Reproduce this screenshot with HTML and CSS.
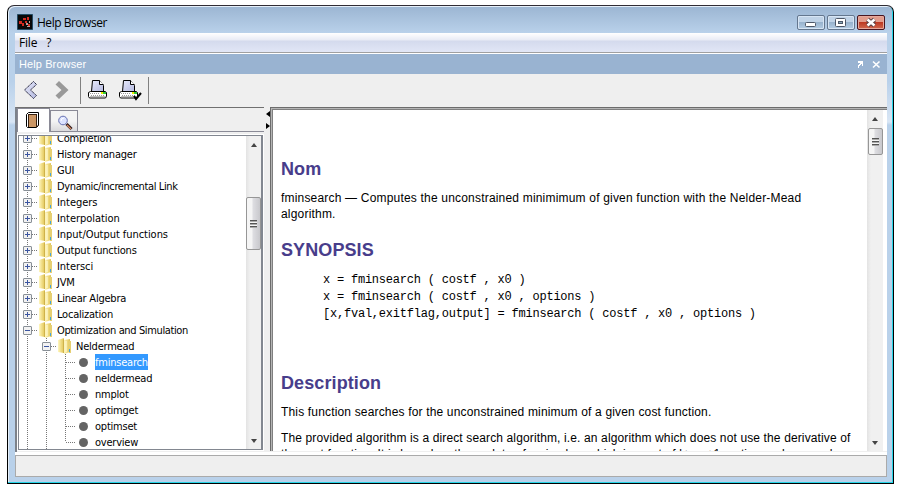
FILE: index.html
```html
<!DOCTYPE html>
<html lang="en">
<head>
<meta charset="utf-8">
<title>Help Browser</title>
<link rel="stylesheet" href="styles.css">
</head>
<body>
<svg class="defs" width="0" height="0">
  <defs>
    <linearGradient id="gold"><stop offset="0" stop-color="#fff7c0"/><stop offset=".5" stop-color="#f0dc84"/><stop offset="1" stop-color="#dfc455"/></linearGradient>
    <linearGradient id="lav" x2="1" y2="1"><stop offset="0" stop-color="#e8eafa"/><stop offset="1" stop-color="#b4b9e0"/></linearGradient>
  </defs>
  <symbol id="folder" viewBox="0 0 14 16">
    <path d="M0 2l6-2v15l-6-1z" fill="url(#gold)"/>
    <path d="M5 1h1v14H5z" fill="#cfb24a"/>
    <path d="M6 2l6-1v13l-6 2z" fill="url(#gold)"/>
    <path d="M7.500 3h1v11h-1z" fill="#fffbd8"/>
    <path d="M11 3h2v12h-2z" fill="#e6cf72"/>
    <path d="M11 11h1v3h-1z" fill="#42a4e0"/>
  </symbol>
  <symbol id="printer" viewBox="0 0 22 22">
    <path d="M4.500 1.500h7l4 5v6h-12z" fill="url(#lav)" stroke="#000"/>
    <path d="M11.500 1.500v4h4" fill="#fff" stroke="#000"/>
    <path d="M2.500 12.500h15l1 1v4l-1 1.500h-16l-1-1.500v-4z" fill="#fff" stroke="#000"/>
    <path d="M2 14.500h10M3 16.500h14" stroke="#999" stroke-dasharray="1 1"/>
    <path d="M2 17.500h16" stroke="#bbb"/>
    <path d="M13 13h2v2h-2z" fill="#f0f000"/><path d="M15 13h3v2h-3z" fill="#35c835"/>
  </symbol>
</svg>
<div class="window">
  <header class="titlebar">
    <svg class="logo" width="16" height="16" viewBox="0 0 16 16"><path d="M.5.5h15v15H.5z" fill="#080808" stroke="#234b63"/><g fill="#d22b20"><path d="M2 7h3v3H2zM5 9h2v3H5zM6 4h3v2H6zM10 3h2v3h-2zM8 7h2v2H8zM11 10h2v2h-2z"/></g><path d="M9 9h2v2H9zM12 7h1v2h-1zM10 12h3v1h-3z" fill="#b5a29d"/></svg>
    <h1>Help Browser</h1>
    <span class="win-btn"><svg width="26" height="13"><rect x="7.500" y="6.500" width="10" height="4" rx="1" fill="#fff" stroke="#4e5868"/></svg></span>
    <span class="win-btn"><svg width="26" height="13"><rect x="7.500" y="2.500" width="10" height="8" rx="1" fill="#fff" stroke="#4e5868"/><rect x="10.500" y="5.500" width="4" height="2" fill="#8ab" stroke="#4e5868"/></svg></span>
    <span class="win-btn close"><svg width="26" height="13"><path d="M9.500 3.500l7 6M16.500 3.500l-7 6" stroke="#594044" stroke-width="4.500"/><path d="M9.500 3.500l7 6M16.500 3.500l-7 6" stroke="#fff" stroke-width="2.500"/></svg></span>
  </header>
  <nav class="menu"><span>File</span><span>?</span></nav>
  <div class="dockbar"><span class="docktitle">Help Browser</span>
    <svg width="9" height="9" shape-rendering="crispEdges"><path d="M2 1h5v5H6V4H5v1H4v1H3v2H2V5h1V4h1V3H2z" fill="#fff"/></svg>
    <svg width="9" height="9"><path d="M1 1.500l6.500 6M7.500 1.500L1 7.500" stroke="#fff" stroke-width="1.600"/></svg>
  </div>
  <div class="toolbar">
    <svg class="arrow" width="16" height="20" viewBox="0 0 16 20"><path d="M10.500 1.500l3 3-6 5.500 6 5.500-3 3L1.500 10z" fill="url(#lav)" stroke="#23233c" stroke-dasharray="1.500 .5"/></svg>
    <svg class="arrow next" width="16" height="20" viewBox="0 0 16 20"><path d="M5 1l9.500 9L5 19l-3.500-3.500L7.500 10l-6-5.500z" fill="#999"/></svg>
    <i class="sep"></i>
    <svg class="print" width="22" height="22"><use href="#printer"/></svg>
    <svg class="print" width="24" height="22"><use href="#printer" width="22" height="22"/><path d="M15 17l2 3 5-6" fill="none" stroke="#000" stroke-width="2"/></svg>
    <i class="sep"></i>
  </div>
  <main class="panes">
    <aside class="side">
      <div class="tabs">
        <div class="tab active"><svg width="16" height="18" viewBox="0 0 16 18"><path d="M3.500 1.500h10v13l-2 2h-9l-1-1v-12z" fill="#fff" stroke="#000"/><path d="M4 4h8v12H4z" fill="#cb9664"/><path d="M3.500 3v13M3 3.500h9M11.500 4v12l2-2" fill="none" stroke="#38200f"/></svg></div>
        <div class="tab"><svg width="16" height="16" viewBox="0 0 16 16"><path d="M9.500 9l5 5" stroke="#301a1a" stroke-width="3"/><path d="M10 10l4 4" stroke="#d88c65" stroke-width="1.300"/><circle cx="6" cy="5.500" r="4.300" fill="#dbe2ff" stroke="#6670b0"/><path d="M4 6q0-3 3-3" stroke="#fff" fill="none"/></svg></div>
      </div>
      <div class="treebox">
        <ul class="tree">
          <li><b class="box plus"></b><svg class="folder"><use href="#folder"/></svg><span>Completion</span></li>
          <li><b class="box plus"></b><svg class="folder"><use href="#folder"/></svg><span>History manager</span></li>
          <li><b class="box plus"></b><svg class="folder"><use href="#folder"/></svg><span>GUI</span></li>
          <li><b class="box plus"></b><svg class="folder"><use href="#folder"/></svg><span class="tight">Dynamic/incremental Link</span></li>
          <li><b class="box plus"></b><svg class="folder"><use href="#folder"/></svg><span class="loose">Integers</span></li>
          <li><b class="box plus"></b><svg class="folder"><use href="#folder"/></svg><span class="loose">Interpolation</span></li>
          <li><b class="box plus"></b><svg class="folder"><use href="#folder"/></svg><span class="loose">Input/Output functions</span></li>
          <li><b class="box plus"></b><svg class="folder"><use href="#folder"/></svg><span>Output functions</span></li>
          <li><b class="box plus"></b><svg class="folder"><use href="#folder"/></svg><span class="loose">Intersci</span></li>
          <li><b class="box plus"></b><svg class="folder"><use href="#folder"/></svg><span>JVM</span></li>
          <li><b class="box plus"></b><svg class="folder"><use href="#folder"/></svg><span>Linear Algebra</span></li>
          <li><b class="box plus"></b><svg class="folder"><use href="#folder"/></svg><span>Localization</span></li>
          <li><b class="box"></b><svg class="folder"><use href="#folder"/></svg><span class="tight">Optimization and Simulation</span></li>
          <li><i class="guide"></i><b class="box"></b><svg class="folder"><use href="#folder"/></svg><span>Neldermead</span></li>
          <li><i class="guide"></i><i class="guide"></i><i class="guide leaf"></i><em class="dot"></em><span class="selected">fminsearch</span></li>
          <li><i class="guide"></i><i class="guide"></i><i class="guide leaf"></i><em class="dot"></em><span>neldermead</span></li>
          <li><i class="guide"></i><i class="guide"></i><i class="guide leaf"></i><em class="dot"></em><span>nmplot</span></li>
          <li><i class="guide"></i><i class="guide"></i><i class="guide leaf"></i><em class="dot"></em><span>optimget</span></li>
          <li><i class="guide"></i><i class="guide"></i><i class="guide leaf"></i><em class="dot"></em><span>optimset</span></li>
          <li><i class="guide"></i><i class="guide"></i><i class="guide leaf end"></i><em class="dot"></em><span>overview</span></li>
        </ul>
        <div class="scroll side-scroll"><i class="up"></i><div class="thumb"><i></i></div><i class="down"></i></div>
      </div>
    </aside>
    <div class="divider"><svg width="4" height="18"><path d="M4 0v6L0 3zM0 12v6l4-3z" fill="#000"/></svg></div>
    <section class="docpane">
      <article class="doc">
        <h2>Nom</h2>
        <p class="lead">fminsearch — Computes the unconstrained minimimum of given function with the Nelder-Mead<br>algorithm.</p>
        <h2 class="synopsis">SYNOPSIS</h2>
        <pre>x = fminsearch ( costf , x0 )
x = fminsearch ( costf , x0 , options )
[x,fval,exitflag,output] = fminsearch ( costf , x0 , options )</pre>
        <h2 class="description">Description</h2>
        <p class="summary">This function searches for the unconstrained minimum of a given cost function.</p>
        <p>The provided algorithm is a direct search algorithm, i.e. an algorithm which does not use the derivative of<br>the cost function. It is based on the update of a simplex, which is a set of k&gt;=n+1 vertices, where each</p>
      </article>
      <div class="scroll doc-scroll"><i class="up"></i><div class="thumb"><i></i></div><i class="down"></i></div>
    </section>
  </main>
  <footer class="status"></footer>
</div>
</body>
</html>
```
FILE: styles.css
```css
*, *::before { box-sizing: border-box; }
body { margin: 0; background: #fff; overflow: hidden; font-family: "Liberation Sans", Arial, sans-serif; color: #000; }
.defs { display: block; height: 0; }
h1, h2, p, pre, ul { margin: 0; padding: 0; font-weight: normal; }
svg { flex: none; display: block; }

.window {
  margin: 5px 0 0 7px; width: 887px; height: 479px; padding: 0 6px 6px 7px;
  display: flex; flex-direction: column;
  border: 1px solid #000; border-top-color: #302c34; border-radius: 7px 7px 0 0;
  box-shadow: inset -1px -1px #27d5e8, inset 1px 1px #e6f0fa;
  background: linear-gradient(#9bb5d2 0, #b9d1ea 27px, #b9d1ea 75px, #d9e6f5 116px, #b9d1ea 119px);
}
.titlebar { height: 27px; flex: none; display: flex; align-items: flex-start; padding: 9px 2px 0 2px; }
.logo { margin-top: -1px; }
.titlebar h1 { flex: 1; margin-left: 4px; font: 12px/16px "Open Sans", sans-serif; letter-spacing: -.48px; }
.win-btn { width: 28px; height: 15px; margin-left: 2px; border: 1px solid #64778e; border-radius: 2px; box-shadow: inset 0 0 0 1px #d7e5f4; background: linear-gradient(#c0d3e7 45%, #98b3ce 50%, #b5cde4); }
.win-btn.close { border-color: #491620; box-shadow: inset 0 0 0 1px #e6a99c; background: linear-gradient(#e29c8c 45%, #bd3a23 50%, #d16a50); }
.menu { height: 20px; flex: none; display: flex; gap: 9px; padding-left: 4px; font: 12px/20px "Open Sans", sans-serif; letter-spacing: -.2px; background: linear-gradient(#fff 0, #e8ebf5 7px, #d4daed 8px, #e1e6f6 19px, #a0a0a0 19px); }
.dockbar { height: 21px; flex: none; display: flex; align-items: center; gap: 7px; padding: 0 6px 0 4px; border-top: 1px solid #fff; background: #99b3d1; color: #fff; font-size: 11px; }
.docktitle { flex: 1; letter-spacing: .1px; }
.toolbar { height: 33px; flex: none; display: flex; align-items: flex-start; background: #efefef; padding: 3px 0 0 8px; }
.arrow { margin: 3px 0 0 0; }
.arrow.next { margin-left: 15px; }
.sep { width: 1px; height: 27px; background: #808080; margin: 0 8px 0 10px; }
.print { margin: 2px 0 0 -1px; }
.print + .print { margin-left: 9px; }
.print + .sep { margin-left: 5px; }

.panes { height: 345px; flex: none; display: flex; background: #efefef; }
.side { width: 249px; display: flex; flex-direction: column; border-top: 1px solid #707070; border-left: 2px solid #7d828a; background: #efefef; }
.tabs { height: 24px; flex: none; display: flex; align-items: flex-end; border-bottom: 1px solid #8a8a96; }
.tab { width: 28px; height: 21px; border: 1px solid #8a8a96; border-bottom: 0; padding: 4px 0 0 6px; background: linear-gradient(#f4f4f4 50%, #d9d9dc); }
.tab.active { width: 33px; height: 24px; margin-bottom: -1px; background: #fff; padding: 2px 0 0 7px; }
.treebox { flex: 1; min-height: 0; display: flex; background: #fff; border: solid #828790; border-width: 1px 2px 1px 1px; outline: 1px solid #fff; margin: 3px 1px 2px 1px; overflow: hidden; }
.tree { flex: 1; list-style: none; margin: -6px 0 0 -1px; font: 11px/17px "DejaVu Sans Condensed", "DejaVu Sans", sans-serif; font-stretch: condensed; letter-spacing: -.22px; white-space: nowrap; overflow: hidden; min-width: 0; }
.tree li { display: flex; height: 16px; }
.box, .guide { flex: none; width: 19px; height: 16px; background: repeating-linear-gradient(#777 0 1px, transparent 1px 2px) 9px 0 / 1px 100% no-repeat; }
.box { display: grid; padding: 4px 5px; background: repeating-linear-gradient(#777 0 1px, transparent 1px 2px) 9px 0 / 1px 100% no-repeat, repeating-linear-gradient(90deg, #777 0 1px, transparent 1px 2px) 14px 8px / 6px 1px no-repeat; }
.box::before { content: ""; width: 9px; height: 9px; border: 1px solid #899097; border-radius: 1px; background: linear-gradient(#3b55a0, #3b55a0) 1px 3px / 5px 1px no-repeat, #f2f2f2; }
.box.plus::before { background: linear-gradient(#3b55a0, #3b55a0) 1px 3px / 5px 1px no-repeat, linear-gradient(#3b55a0, #3b55a0) 3px 1px / 1px 5px no-repeat, #f2f2f2; }
.leaf { background: repeating-linear-gradient(#777 0 1px, transparent 1px 2px) 9px 0 / 1px 100% no-repeat, repeating-linear-gradient(90deg, #777 0 1px, transparent 1px 2px) 10px 8px / 10px 1px no-repeat; }
.leaf.end { background-size: 1px 8px, 10px 1px; }
.folder { width: 14px; height: 16px; margin: 0 4px 0 2px; }
.tree .tight { letter-spacing: -.37px; }
.tree .loose { letter-spacing: -.05px; }
.dot { width: 9px; height: 9px; margin: 4px 7px 0 4px; border-radius: 50%; background: #646464; }
.selected { background: #3399ff; color: #fff; }

.scroll { flex: none; display: flex; flex-direction: column; align-items: center; background: linear-gradient(90deg, #e3e3e3, #f0f0f0 4px, #f0f0f0); }
.up, .down { width: 0; height: 0; border: solid transparent; border-width: 0 3.500px 4px; border-bottom-color: #444; }
.down { border-width: 4px 3.500px 0; border-top-color: #444; margin-top: auto; }
.thumb { width: 15px; border: 1px solid #969696; border-radius: 2px; background: linear-gradient(90deg, #f5f5f5 35%, #dcdce0 50%, #c8c8cc); display: grid; place-items: center; }
.thumb i { width: 7px; height: 8px; background: repeating-linear-gradient(#555 0 1px, #aaa 1px 2px, #f4f4f4 2px 3px); }
.side-scroll { width: 15px; padding: 7px 0 6px; }
.side-scroll .thumb { height: 53px; margin-top: 50px; }
.divider { width: 6px; flex: none; padding: 4px 0 0 2px; }
.docpane { flex: 1; min-width: 0; display: flex; background: #fff; border: solid #6c6c6c; border-width: 1px 0 0 1px; box-shadow: inset 1px 1px #b4b4b4, inset 2px 2px #808080; padding: 2px 0 0 2px; margin-bottom: 1px; overflow: hidden; }
.doc { flex: 1; padding: 48px 0 0 8px; font-size: 12px; line-height: 16px; letter-spacing: .13px; white-space: nowrap; min-width: 0; overflow: hidden; }
.doc h2 { font-size: 18px; line-height: 22px; font-weight: bold; color: #483d8b; letter-spacing: .1px; }
.doc p { margin-top: 10px; }
.doc .lead { letter-spacing: .19px; }
.doc .summary { letter-spacing: .165px; }
.doc .synopsis { margin-top: 17px; }
.doc pre { margin: 11px 0 0 42px; font: 12px/17px "Liberation Mono", monospace; letter-spacing: -.22px; }
.doc .description { margin-top: 49px; }
.doc-scroll { width: 16px; margin-right: 4px; padding: 7px 0 6px; }
.doc-scroll .thumb { height: 27px; margin-top: 7px; }
.status { flex: 1; border-top: 3px solid #fff; background: #efefef; box-shadow: inset 1px 1px #aaa, inset -1px -1px #aaa; }
```
